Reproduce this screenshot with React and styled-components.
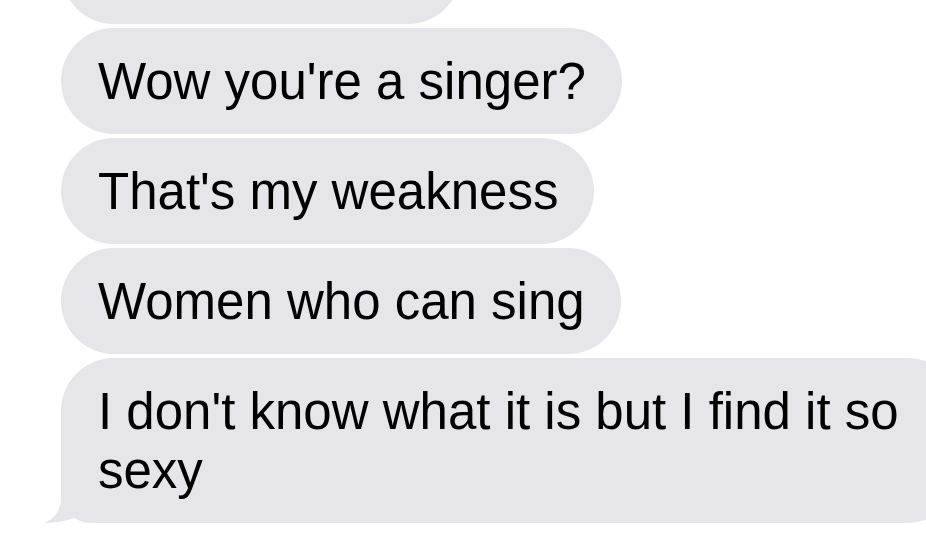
import styled, { createGlobalStyle } from "styled-components";

const GlobalStyle = createGlobalStyle`
    html, body {
        margin : 0;
        padding : 0;
        background : #ffffff;
        overflow : hidden;
    }
`;

const Thread = styled.div`
    width : 926px;
    height : 539px;
    overflow : hidden;

    display : flex;
    flex-direction : column;
    align-items : flex-start;
    gap : 4px;

    padding-left : 61px;
    box-sizing : border-box;

    font-family : "Liberation Sans", Arial, sans-serif;
`;

const Scroll = styled.div`
    margin-top : -82px;
    display : flex;
    flex-direction : column;
    align-items : flex-start;
    gap : 4px;
`;

const Bubble = styled.div`
    position : relative;
    box-sizing : border-box;
    width : ${(p) => (p.$width ? p.$width + "px" : "auto")};
    min-height : 106px;
    padding : 24px 36px 23px 37px;

    background : #e5e5ea;
    color : #000000;
    border-radius : 53px;
    ${(p) => p.$tail && "border-bottom-left-radius : 30px;"}

    font-size : 51px;
    line-height : 59px;
    white-space : ${(p) => (p.$width ? "normal" : "nowrap")};
`;

const Tail = styled.svg`
    position : absolute;
    left : -18px;
    bottom : 0;
    width : 50px;
    height : 40px;
    overflow : visible;
`;

const messages = [
    { text: "", width: 400 },
    { text: "Wow you're a singer?" },
    { text: "That's my weakness" },
    { text: "Women who can sing" },
    { text: "I don't know what it is but I find it so sexy", width: 900, tail: true },
];

const App = () => {
    return (
        <>
            <GlobalStyle />
            <Thread>
                <Scroll>
                    {messages.map((m, i) => (
                        <Bubble key={i} $width={m.width} $tail={m.tail}>
                            {m.text}
                            {m.tail && (
                                <Tail viewBox="0 0 50 40">
                                    <path
                                        d="M18,0 L18,15 C18,28 10,37 1,40 C12,40 25,38 35,33 L30,0 Z"
                                        fill="#e5e5ea"
                                    />
                                </Tail>
                            )}
                        </Bubble>
                    ))}
                </Scroll>
            </Thread>
        </>
    );
};

export default App;
